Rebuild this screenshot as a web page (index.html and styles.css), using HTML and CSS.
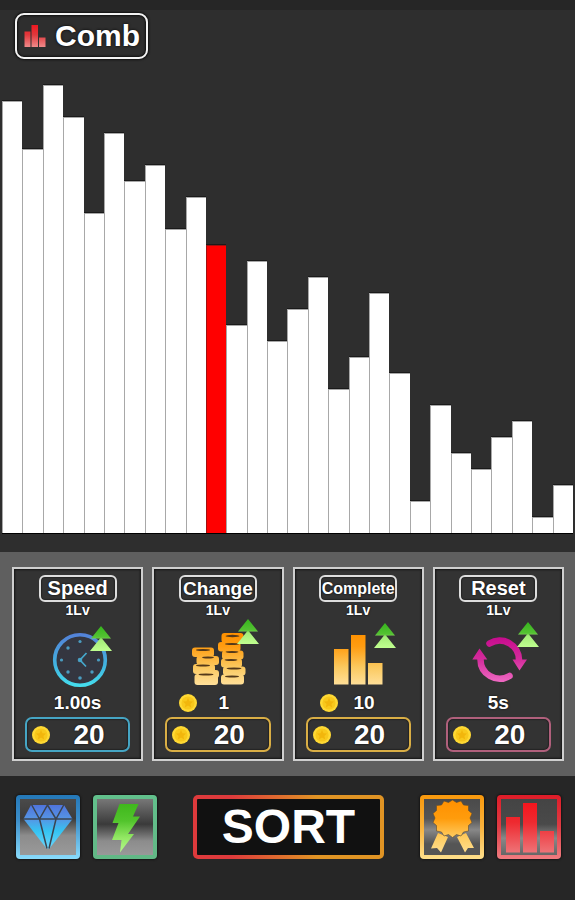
FILE: index.html
```html
<!DOCTYPE html>
<html lang="en">

<head>
    <meta charset="UTF-8">
    <meta name="viewport" content="width=device-width, initial-scale=1.0">
    <title>Comb Sort</title>

    <link rel="stylesheet" href="styles.css">
</head>

<body>
    <!-- shared gradients and icons -->
    <svg class="defs" width="0" height="0" aria-hidden="true">
        <defs>
            <linearGradient id="green" x1="0" y1="0" x2="0" y2="1">
                <stop offset="0" stop-color="#35b51c" />
                <stop offset="0.45" stop-color="#55c233" />
                <stop offset="0.55" stop-color="#a4ec78" />
                <stop offset="1" stop-color="#c0ff90" />
            </linearGradient>
            <linearGradient id="gold" gradientUnits="userSpaceOnUse" x1="0" y1="16" x2="0" y2="67">
                <stop offset="0" stop-color="#ff9100" />
                <stop offset="0.25" stop-color="#ff9d12" />
                <stop offset="0.65" stop-color="#fbc95f" />
                <stop offset="1" stop-color="#ffe09a" />
            </linearGradient>
            <linearGradient id="blue" gradientUnits="userSpaceOnUse" x1="0" y1="15" x2="0" y2="69">
                <stop offset="0" stop-color="#5480d8" />
                <stop offset="0.6" stop-color="#41b4e0" />
                <stop offset="1" stop-color="#45e0ee" />
            </linearGradient>
            <linearGradient id="pink" gradientUnits="userSpaceOnUse" x1="0" y1="18" x2="0" y2="65">
                <stop offset="0" stop-color="#c50a8c" />
                <stop offset="0.5" stop-color="#d42c9c" />
                <stop offset="1" stop-color="#f06cc4" />
            </linearGradient>
            <linearGradient id="red" gradientUnits="userSpaceOnUse" x1="0" y1="0" x2="0" y2="22">
                <stop offset="0" stop-color="#f01820" />
                <stop offset="0.45" stop-color="#e0393d" />
                <stop offset="1" stop-color="#f08a8a" />
            </linearGradient>
        </defs>
        <symbol id="arrows" viewBox="0 0 22 25">
            <path fill="url(#green)" d="M11 0 L21 12.5 H12 L22 25 H0 L10 12.5 H1 Z" />
        </symbol>
        <symbol id="coin" viewBox="0 0 18 18">
            <circle cx="9" cy="9" r="9" fill="#ffd934" />
            <circle cx="9" cy="9" r="6.6" fill="#f8c81c" />
            <path fill="#f2b60c" d="M9 4 L10.5 7.300 L14 7.600 L11.400 9.900 L12.200 13.400 L9 11.600 L5.800 13.400 L6.600 9.900 L4 7.600 L7.500 7.300 Z" />
        </symbol>
    </svg>

    <div class="page">
        <main class="stage">
            <button type="button" class="algorithm">
                <svg width="22" height="22" viewBox="0 0 22 22" fill="url(#red)" aria-hidden="true">
                    <path d="M0.5 6.5h6v15.500h-6zM7.500 0h6.500v22h-6.500zM15 12.500h6.500v9.500h-6.500z" />
                </svg>
                Comb
            </button>
            <div class="chart" id="chart"></div>
        </main>

        <section class="upgrades">
            <article class="card">
                <h2 class="name">Speed</h2>
                <p class="level">1Lv</p>
                <svg class="art" viewBox="0 0 104 74" aria-hidden="true">
                    <circle cx="54" cy="42" r="25.300" fill="#343640" stroke="url(#blue)" stroke-width="3.600" />
                    <g fill="#4a9cc0">
                        <circle cx="54" cy="23.500" r="1.600" />
                        <circle cx="42" cy="30" r="1.700" />
                        <circle cx="35.500" cy="42" r="1.600" />
                        <circle cx="42" cy="54" r="1.700" />
                        <circle cx="54" cy="60" r="1.800" />
                        <circle cx="66" cy="54" r="1.700" />
                        <circle cx="72.500" cy="42" r="1.600" />
                        <circle cx="54" cy="42" r="2.300" />
                    </g>
                    <path d="M60.500 35 L54 42 L60 48.500" fill="none" stroke="#45a8cc" stroke-width="1.700" />
                    <use href="#arrows" x="64" y="8" width="22" height="25" />
                </svg>
                <p class="stat">1.00s</p>
                <button type="button" class="price price-blue">
                    <svg class="coin" aria-hidden="true"><use href="#coin" /></svg>
                    <span>20</span>
                </button>
            </article>

            <article class="card">
                <h2 class="name name-long">Change</h2>
                <p class="level">1Lv</p>
                <svg class="art" viewBox="0 0 104 74" aria-hidden="true">
                    <g fill="url(#gold)">
                        <rect x="26" y="29.500" width="22" height="9.500" rx="3" />
                        <rect x="30.500" y="38" width="22.500" height="9" rx="3" />
                        <rect x="27" y="46" width="22" height="10" rx="3" />
                        <rect x="31" y="52" width="22" height="8" rx="3" />
                        <rect x="28.500" y="56" width="23.500" height="11" rx="3" />
                        <rect x="55.500" y="15" width="22" height="10" rx="3" />
                        <rect x="52" y="24" width="22.500" height="9.500" rx="3" />
                        <rect x="56" y="32.500" width="21.500" height="9" rx="3" />
                        <rect x="55" y="40.500" width="21" height="9" rx="3" />
                        <rect x="57" y="48.500" width="22.500" height="9" rx="3" />
                        <rect x="55" y="56.500" width="23" height="10" rx="3" />
                    </g>
                    <g fill="#54391a">
                        <ellipse cx="37" cy="32" rx="7" ry="1.100" />
                        <ellipse cx="42" cy="39.500" rx="6" ry="0.900" />
                        <ellipse cx="37" cy="47.500" rx="7" ry="1" />
                        <ellipse cx="40" cy="56.500" rx="7.500" ry="1.100" />
                        <ellipse cx="66.500" cy="18" rx="7" ry="1.200" />
                        <ellipse cx="66" cy="26" rx="7" ry="1" />
                        <ellipse cx="66" cy="34" rx="6.500" ry="0.900" />
                        <ellipse cx="65" cy="42" rx="6.500" ry="0.900" />
                        <ellipse cx="68" cy="50.500" rx="7.500" ry="0.900" />
                        <ellipse cx="66" cy="58.500" rx="7" ry="1" />
                    </g>
                    <use href="#arrows" x="71" y="1" width="22" height="25" />
                </svg>
                <p class="stat stat-coin">
                    <svg class="coin" aria-hidden="true"><use href="#coin" /></svg>
                    <span>1</span>
                </p>
                <button type="button" class="price price-gold">
                    <svg class="coin" aria-hidden="true"><use href="#coin" /></svg>
                    <span>20</span>
                </button>
            </article>

            <article class="card">
                <h2 class="name name-longest">Complete</h2>
                <p class="level">1Lv</p>
                <svg class="art" viewBox="0 0 104 74" fill="url(#gold)" aria-hidden="true">
                    <rect x="28" y="31" width="14.500" height="35.500" />
                    <rect x="45" y="17" width="14.500" height="49.500" />
                    <rect x="62" y="45" width="14.500" height="21.500" />
                    <use href="#arrows" x="68" y="5" width="22" height="25" />
                </svg>
                <p class="stat stat-coin">
                    <svg class="coin" aria-hidden="true"><use href="#coin" /></svg>
                    <span>10</span>
                </p>
                <button type="button" class="price price-gold">
                    <svg class="coin" aria-hidden="true"><use href="#coin" /></svg>
                    <span>20</span>
                </button>
            </article>

            <article class="card">
                <h2 class="name">Reset</h2>
                <p class="level">1Lv</p>
                <svg class="art" viewBox="0 0 104 74" aria-hidden="true">
                    <g fill="none" stroke="url(#pink)" stroke-width="6.500">
                        <path d="M43.500 25.500 A19.300 19.300 0 0 1 73 42" stroke-linecap="round" />
                        <path d="M63.500 58 A19.300 19.300 0 0 1 34.500 41" stroke-linecap="round" />
                    </g>
                    <path fill="url(#pink)" d="M66.500 41.500 H81 L73.500 52.500 Z M33.500 30.500 L41.300 41.500 H26.300 Z" />
                    <use href="#arrows" x="71" y="4" width="22" height="25" />
                </svg>
                <p class="stat">5s</p>
                <button type="button" class="price price-pink">
                    <svg class="coin" aria-hidden="true"><use href="#coin" /></svg>
                    <span>20</span>
                </button>
            </article>
        </section>

        <footer class="toolbar">
            <div class="group">
                <button type="button" class="tool tool-blue" aria-label="Gems">
                    <svg viewBox="0 0 64 64" aria-hidden="true">
                        <linearGradient id="gem" x1="0" y1="0" x2="0" y2="1">
                            <stop offset="0" stop-color="#4f74dc" />
                            <stop offset="0.32" stop-color="#5695e4" />
                            <stop offset="0.6" stop-color="#35c4f2" />
                            <stop offset="1" stop-color="#6cd4fa" />
                        </linearGradient>
                        <path fill="url(#gem)" d="M15 10 L48 10 L56.500 24 L33.500 53.500 H30.500 L7.500 24 Z" />
                        <path fill="none" stroke="#3b4450" stroke-width="1.500" d="M7 24 H57 M15.500 9.500 L23.500 24 L31.500 10 L40 24 L48 9.500 M23.500 24 L31 53.500 M40 24 L33 53.500" />
                    </svg>
                </button>
                <button type="button" class="tool tool-green" aria-label="Boost">
                    <svg viewBox="0 0 64 64" aria-hidden="true">
                        <linearGradient id="bolt" x1="0" y1="0" x2="0" y2="1">
                            <stop offset="0" stop-color="#3fb81c" />
                            <stop offset="0.35" stop-color="#52c42c" />
                            <stop offset="0.7" stop-color="#94e865" />
                            <stop offset="1" stop-color="#b4f78c" />
                        </linearGradient>
                        <path fill="url(#bolt)" d="M26.500 9 H45.500 L40 21.500 H47 L35 39 H41 L27 57.500 L28.500 45 H19 L25.500 28 H19.500 Z" />
                    </svg>
                </button>
            </div>

            <button type="button" class="sort">SORT</button>

            <div class="group">
                <button type="button" class="tool tool-orange" aria-label="Awards">
                    <svg viewBox="0 0 64 64" aria-hidden="true">
                        <linearGradient id="medal" gradientUnits="userSpaceOnUse" x1="0" y1="5" x2="0" y2="58">
                            <stop offset="0" stop-color="#ff9000" />
                            <stop offset="0.35" stop-color="#ff9c0c" />
                            <stop offset="0.7" stop-color="#ffcc60" />
                            <stop offset="1" stop-color="#ffdf90" />
                        </linearGradient>
                        <g fill="url(#medal)">
                            <path d="M18 38 L11 53.500 L17 53 L21 57.500 L28 42 Z M46 38 L54 53 L48 53 L45 57.500 L37 42 Z" />
                            <path stroke="#5c4c30" stroke-width="0.600" d="M32.500 5 L36.500 7.500 L41 6 L43.500 10 L48.500 10.500 L48.500 15.500 L52 18.500 L50 23 L52 27.500 L48.500 30.500 L48.500 36 L43.500 37 L41 41 L36.500 39.500 L32.500 42.500 L28.500 39.500 L24 41 L21.500 37 L16.500 36 L16.500 30.500 L13 27.500 L15 23 L13 18.500 L16.500 15.500 L16.500 10.500 L21.500 10 L24 6 L28.500 7.500 Z" />
                        </g>
                    </svg>
                </button>
                <button type="button" class="tool tool-red" aria-label="Algorithms">
                    <svg viewBox="0 0 64 64" aria-hidden="true">
                        <linearGradient id="stats" gradientUnits="userSpaceOnUse" x1="0" y1="7" x2="0" y2="58">
                            <stop offset="0" stop-color="#f5141c" />
                            <stop offset="0.4" stop-color="#ee2a30" />
                            <stop offset="1" stop-color="#ee7478" />
                        </linearGradient>
                        <path fill="url(#stats)" d="M9 22h14v35.500h-14zM26 8h14v49.500h-14zM43 36h14v21.500h-14z" />
                    </svg>
                </button>
            </div>
        </footer>
    </div>

    <script>
        const values = [27, 24, 28, 26, 20, 25, 22, 23, 19, 21, 18, 13, 17, 12, 14, 16, 9, 11, 15, 10, 2, 8, 5, 4, 6, 7, 1, 3];
        const current = 10;
        const chart = document.getElementById('chart');

        values.forEach((value, index) => {
            const bar = document.createElement('div');
            bar.className = index === current ? 'bar current' : 'bar';
            bar.style.height = (value / values.length * 100) + '%';
            chart.appendChild(bar);
        });
    </script>
</body>

</html>
```

FILE: styles.css
```css
* {
    box-sizing: border-box;
}

body {
    margin: 0;
    background-color: #262626;
    color: white;
    font-family: "Liberation Sans", Arial, sans-serif;
    font-weight: bold;
}

button {
    padding: 0;
    border: none;
    background: none;
    color: white;
    font: inherit;
    cursor: pointer;
}

h2,
p {
    margin: 0;
}

svg {
    display: block;
    flex: none;
}

.defs {
    position: absolute;
}

.page {
    display: flex;
    flex-direction: column;
    height: 100vh;
    min-height: 600px;
}

/* chart */
.stage {
    flex: 1;
    display: flex;
    flex-direction: column;
    align-items: flex-start;
    padding: 3px 2px 18px;
    border-top: 10px solid #262626;
    background-color: #2e2e2e;
}

.algorithm {
    display: flex;
    align-items: center;
    gap: 9px;
    margin: 0 0 26px 13px;
    padding: 4px 6px 4px 7px;
    border: 2px solid #f4f4f4;
    border-radius: 9px;
    box-shadow: 0 0 2px 1px #111, inset 0 0 2px 1px #111;
    font-size: 30px;
    line-height: 34px;
    text-shadow: 0 0 3px black;
}

.chart {
    flex: 1;
    display: flex;
    align-items: flex-end;
    width: 100%;
    border-bottom: 1px solid black;
}

.bar {
    flex: 1;
    background-color: white;
    border: 1px solid #a8a8a8;
    border-width: 1px 0 0 1px;
    box-shadow: 0 -1px 0 #1a1a1a;
}

.bar.current {
    background-color: red;
    border-color: #a01010;
}

/* upgrade cards */
.upgrades {
    display: grid;
    grid-template-columns: repeat(4, 1fr);
    gap: 9px;
    padding: 15px 11px 15px 12px;
    background-color: #5f5f5f;
}

.card {
    display: flex;
    flex-direction: column;
    align-items: center;
    padding: 6px 11px 7px;
    border: 2px solid #cfcfcf;
    background-color: #333;
    box-shadow: inset 0 0 2px 1px #151515;
    text-shadow: 0 0 2px black;
}

.name {
    width: 78px;
    border: 2px solid #dedede;
    border-radius: 6px;
    box-shadow: inset 0 0 2px #000;
    font-size: 20px;
    line-height: 23px;
    text-align: center;
}

.name-long {
    font-size: 19px;
}

.name-longest {
    font-size: 16px;
}

.level {
    font-size: 14px;
    line-height: 16px;
}

.art {
    width: 104px;
    height: 74px;
}

.stat {
    align-self: stretch;
    margin-bottom: 3px;
    font-size: 19px;
    line-height: 22px;
    text-align: center;
}

.stat-coin {
    display: flex;
    align-items: center;
    padding: 0 20px 0 14px;
}

.stat-coin span,
.price span {
    flex: 1;
    text-align: center;
}

.coin {
    width: 18px;
    height: 18px;
}

.price {
    display: flex;
    align-items: center;
    align-self: stretch;
    padding: 0 0 0 5px;
    border: 2px solid;
    border-radius: 7px;
    box-shadow: inset 0 0 2px #000;
    font-size: 28px;
    line-height: 31px;
    text-shadow: 0 0 2px black;
}

.price-blue {
    border-color: #45a5c4;
}

.price-gold {
    border-color: #d9ae45;
}

.price-pink {
    border-color: #b0607c;
}

/* bottom bar */
.toolbar {
    display: flex;
    justify-content: space-between;
    padding: 19px 14px 41px 16px;
    background-color: #262626;
}

.group {
    display: flex;
    gap: 13px;
}

.tool {
    border: 4px solid transparent;
    border-radius: 4px;
    box-shadow: 0 0 2px 1px #151515;
}

.tool svg {
    width: 64px;
    height: 64px;
    margin: -4px;
}

.tool-blue {
    background: linear-gradient(#4a4a4a, #3c3c3c 35%, #8c8c8c 65%, #9a9a9a) padding-box, linear-gradient(#2478b8, #3d8fca 40%, #8adcfc) border-box;
}

.tool-green {
    background: linear-gradient(#777, #3a3a3a 45%, #8c8c8c 75%, #999) padding-box, linear-gradient(#62c08c, #62b886) border-box;
}

.tool-orange {
    background: linear-gradient(#4a4a4a, #555 35%, #888 55%, #555 80%) padding-box, linear-gradient(#f8980c, #f8b23c 50%, #ffe08c) border-box;
}

.tool-red {
    background: linear-gradient(#444, #4a4a4a 45%, #888 70%, #666) padding-box, linear-gradient(#de1c28, #de3c44 50%, #f07c80) border-box;
}

.sort {
    padding: 0 25px;
    border: 4px solid transparent;
    border-radius: 5px;
    background: linear-gradient(#111, #111) padding-box, linear-gradient(to right, #de3a3c 20%, #e09424 65%) border-box;
    font-size: 48px;
    line-height: 56px;
}
```
